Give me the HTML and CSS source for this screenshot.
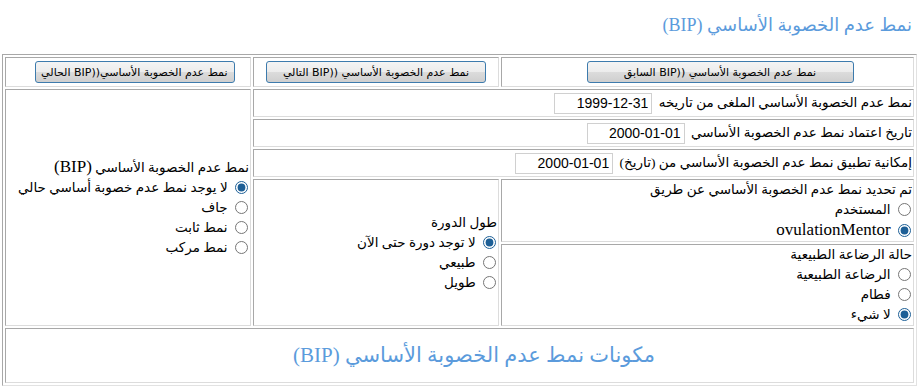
FILE: index.html
```html
<!DOCTYPE html>
<html lang="ar" dir="rtl">
<head>
    <meta charset="UTF-8">
    <meta name="viewport" content="width=device-width, initial-scale=1.0">
    <title>نمط عدم الخصوبة الأساسي</title>
    <link rel="stylesheet" href="styles.css">
</head>
<body>
    <h1 class="page-title">نمط عدم الخصوبة الأساسي (BIP)</h1>

    <table class="bip-table">
        <colgroup>
            <col class="col-right">
            <col class="col-mid">
            <col class="col-left">
        </colgroup>
        <tr class="nav-row">
            <td class="nav-prev"><button class="nav-btn btn-prev">نمط عدم الخصوبة الأساسي ((BIP السابق</button></td>
            <td><button class="nav-btn btn-next">نمط عدم الخصوبة الأساسي ((BIP التالي</button></td>
            <td class="nav-current"><button class="nav-btn btn-current">نمط عدم الخصوبة الأساسي((BIP الحالي</button></td>
        </tr>
        <tr class="field-row">
            <td colspan="2">
                <label for="cancelled">نمط عدم الخصوبة الأساسي الملغى من تاريخه</label>
                <input type="text" id="cancelled" value="1999-12-31">
            </td>
            <td rowspan="5" class="bip-cell">
                <div class="group-title">نمط عدم الخصوبة الأساسي <span class="latin">(BIP)</span></div>
                <label class="choice"><input type="radio" name="bip" checked> لا يوجد نمط عدم خصوبة أساسي حالي</label>
                <label class="choice"><input type="radio" name="bip"> جاف</label>
                <label class="choice"><input type="radio" name="bip"> نمط ثابت</label>
                <label class="choice"><input type="radio" name="bip"> نمط مركب</label>
            </td>
        </tr>
        <tr class="field-row">
            <td colspan="2">
                <label for="approved">تاريخ اعتماد نمط عدم الخصوبة الأساسي</label>
                <input type="text" id="approved" value="2000-01-01">
            </td>
        </tr>
        <tr class="field-row">
            <td colspan="2">
                <label for="applies">إمكانية تطبيق نمط عدم الخصوبة الأساسي من (تاريخ)</label>
                <input type="text" id="applies" value="2000-01-01">
            </td>
        </tr>
        <tr class="box-row">
            <td class="box-cell">
                <div class="group-title">تم تحديد نمط عدم الخصوبة الأساسي عن طريق</div>
                <label class="choice"><input type="radio" name="source"> المستخدم</label>
                <label class="choice"><input type="radio" name="source" checked> <span class="latin">ovulationMentor</span></label>
            </td>
            <td rowspan="2" class="cycle-cell">
                <div class="group-title">طول الدورة</div>
                <label class="choice"><input type="radio" name="cycle" checked> لا توجد دورة حتى الآن</label>
                <label class="choice"><input type="radio" name="cycle"> طبيعي</label>
                <label class="choice"><input type="radio" name="cycle"> طويل</label>
            </td>
        </tr>
        <tr class="box-row tall">
            <td class="box-cell">
                <div class="group-title">حالة الرضاعة الطبيعية</div>
                <label class="choice"><input type="radio" name="nursing"> الرضاعة الطبيعية</label>
                <label class="choice"><input type="radio" name="nursing"> فطام</label>
                <label class="choice"><input type="radio" name="nursing" checked> لا شيء</label>
            </td>
        </tr>
        <tr class="footer-row">
            <td colspan="3">مكونات نمط عدم الخصوبة الأساسي (BIP)</td>
        </tr>
    </table>
</body>
</html>
```

FILE: styles.css
```css
body {
    font-family: "Liberation Serif", "DejaVu Sans", serif;
    font-size: 13.5px;
    margin: 0;
    padding: 0;
    background-color: #fff;
    color: #000;
}
.page-title {
    margin: 0;
    padding: 14px 5px 0;
    height: 54px;
    box-sizing: border-box;
    font-size: 18px;
    font-weight: normal;
    line-height: 22px;
    color: #5b9bdc;
}
.bip-table {
    width: 915px;
    border-collapse: separate;
    border-spacing: 2px;
    border: 1px solid;
    border-color: #a8a8a8 #e2e2e2 #e2e2e2 #a8a8a8;
}
.col-right {
    width: 413px;
}
.col-mid {
    width: 246px;
}
.bip-table td {
    padding: 0 1px;
    border: 1px solid;
    border-color: #a8a8a8 #dcdcdc #dcdcdc #a8a8a8;
    text-align: right;
    white-space: nowrap;
}
.latin {
    font-size: 17px;
}
.nav-row td {
    height: 28px;
    text-align: center;
}
.bip-table td.nav-prev {
    padding-left: 26px;
}
.bip-table td.nav-current {
    padding-left: 14px;
}
.nav-btn {
    height: 22px;
    padding: 0 6px;
    font-family: "DejaVu Sans", "Liberation Sans", sans-serif;
    font-size: 11px;
    color: #000;
    border: 1px solid #3d7bad;
    border-radius: 3px;
    background: linear-gradient(#f4f4f4, #ececec 50%, #dcdcdc 50%, #cfcfcf);
    cursor: pointer;
}
.btn-prev {
    width: 267px;
}
.btn-next {
    width: 220px;
}
.btn-current {
    width: 200px;
}
.field-row td {
    height: 26px;
}
.field-row input {
    width: 98px;
    height: 21px;
    box-sizing: border-box;
    margin: 0 3px 0 0;
    padding: 0 3px;
    border: 1px solid #d0d0d0;
    font-family: "Liberation Sans", Arial, sans-serif;
    font-size: 14px;
    vertical-align: middle;
}
.group-title,
.choice {
    display: block;
    line-height: 20px;
}
.choice input {
    width: 13px;
    height: 13px;
    margin: 0 1px 0 4px;
    vertical-align: -2px;
    accent-color: #1d5f96;
}
.bip-cell,
.cycle-cell {
    vertical-align: middle;
}
.box-cell {
    vertical-align: top;
}
.box-row td.box-cell {
    height: 61px;
}
.box-row.tall td.box-cell {
    height: 79px;
}
.footer-row td {
    height: 53px;
    padding-left: 30px;
    text-align: center;
    font-size: 21px;
    color: #5b9bdc;
}
```
